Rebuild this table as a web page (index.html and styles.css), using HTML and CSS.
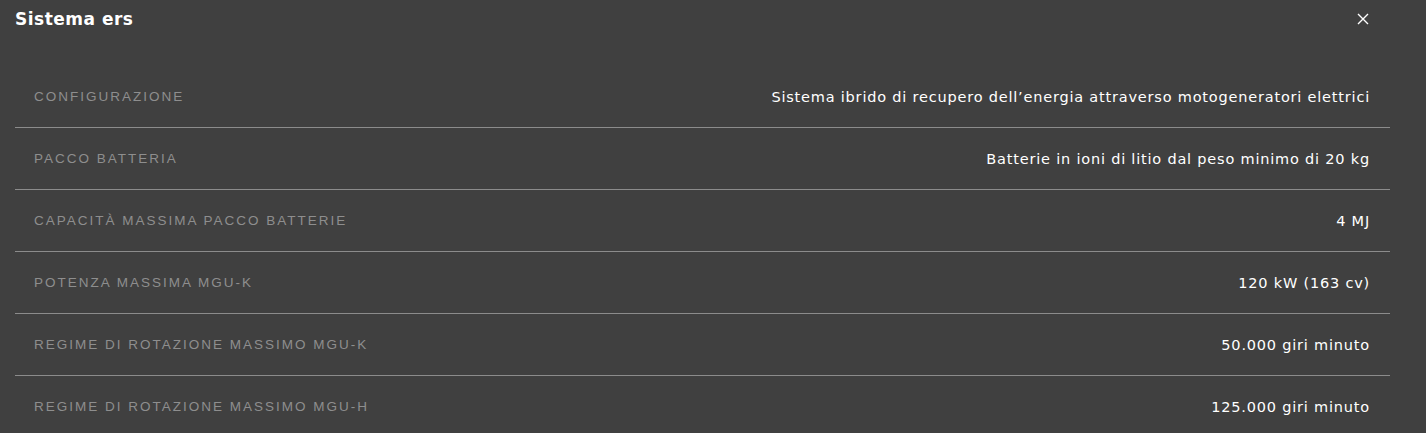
FILE: index.html
```html
<!DOCTYPE html>
<html lang="it">
<head>
<meta charset="utf-8">
<title>Sistema ers</title>
<link rel="stylesheet" href="styles.css">
</head>
<body>
<div class="panel">
  <div class="header">
    <h2 class="title">Sistema ers</h2>
    <button class="close" aria-label="Chiudi">
      <svg width="12" height="12" viewBox="0 0 12 12"><path d="M1 1L11 11M11 1L1 11" stroke="#fff" stroke-width="1.4" fill="none"/></svg>
    </button>
  </div>
  <div class="specs">
    <div class="row"><span class="label">Configurazione</span><span class="value">Sistema ibrido di recupero dell’energia attraverso motogeneratori elettrici</span></div>
    <div class="row"><span class="label">Pacco batteria</span><span class="value">Batterie in ioni di litio dal peso minimo di 20 kg</span></div>
    <div class="row"><span class="label">Capacità massima pacco batterie</span><span class="value">4 MJ</span></div>
    <div class="row"><span class="label">Potenza massima MGU-K</span><span class="value">120 kW (163 cv)</span></div>
    <div class="row"><span class="label">Regime di rotazione massimo MGU-K</span><span class="value">50.000 giri minuto</span></div>
    <div class="row"><span class="label">Regime di rotazione massimo MGU-H</span><span class="value">125.000 giri minuto</span></div>
  </div>
</div>
</body>
</html>
```
FILE: styles.css
```css
html, body {
  margin: 0;
  padding: 0;
  background: #404040;
}
.panel {
  padding: 0 36px 0 15px;
  color: #fff;
  font-family: "DejaVu Sans", "Noto Sans", sans-serif;
}
.header {
  display: flex;
  justify-content: space-between;
  align-items: center;
  height: 38px;
  padding-right: 20px;
}
.title {
  margin: 0;
  font-size: 17px;
  font-weight: 700;
  letter-spacing: 0.5px;
}
.close {
  background: none;
  border: 0;
  padding: 0;
  width: 14px;
  height: 14px;
  display: flex;
  align-items: center;
  justify-content: center;
}
.specs {
  margin-top: 28px;
}
.row {
  display: flex;
  justify-content: space-between;
  align-items: center;
  height: 61px;
  padding: 0 20px 0 19px;
  border-bottom: 1px solid #8c8c8c;
}
.row:last-child {
  border-bottom: 0;
}
.label {
  font-family: "Liberation Sans", Arial, sans-serif;
  text-transform: uppercase;
  font-size: 13.5px;
  letter-spacing: 2px;
  color: #8e8e8e;
}
.value {
  font-size: 14.5px;
  font-weight: 400;
  letter-spacing: 0.8px;
  color: #fff;
}
```
